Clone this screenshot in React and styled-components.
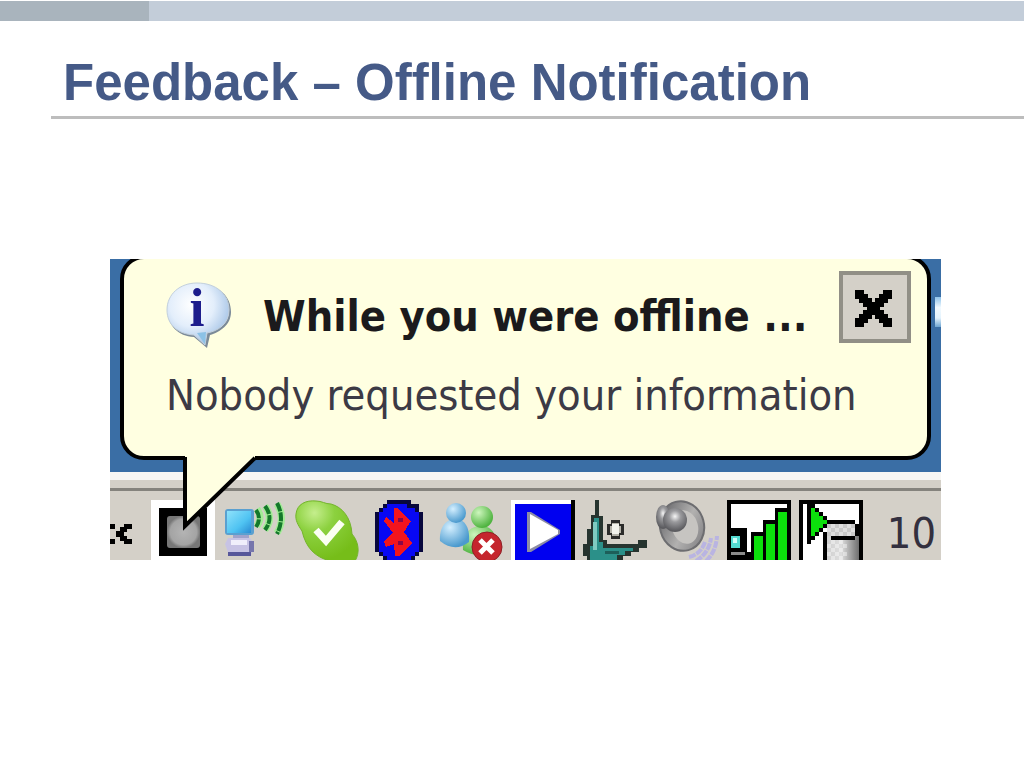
import React from 'react';
import styled, { createGlobalStyle } from 'styled-components'

const GlobalStyle = createGlobalStyle`
    * {
        box-sizing: border-box;
    }
    body {
        margin: 0;
        background-color: #fff;
        font-family: "Liberation Sans", Arial, sans-serif;
    }
`

const Slide = styled.div`
    padding-top: 1px;
`

const TopBar = styled.div`
    display: flex;
    height: 20px;
    background-color: #c3cdd9;
`

const TopBarAccent = styled.div`
    width: 149px;
    background-color: #a9b4bd;
`

const TitleBlock = styled.header`
    margin-left: 51px;
    padding: 32px 12px 4px;
    border-bottom: 3px solid #bdbdbd;
`

const Title = styled.h1`
    margin: 0;
    color: #455a87;
    font-size: 51px;
    line-height: 59px;
    font-weight: bold;
`

const Content = styled.main`
    padding: 140px 83px 40px 110px;
`

const Screen = styled.section`
    overflow: hidden;
    background-color: #3a6ea5;
`

const Desktop = styled.div`
    position: relative;
    padding: 0 10px 12px;
`

const DesktopIcon = styled.div`
    position: absolute;
    top: 42px;
    right: 0;
    width: 6px;
    height: 30px;
    background: linear-gradient(#8fc3ea, #f2faff 35%, #e4f3fd 70%, #6fa6d2);
`

const Balloon = styled.div`
    position: relative;
    margin-top: -4px;
    padding: 12px 16px 35px 42px;
    border: 4px solid #000;
    border-radius: 24px;
    background-color: #ffffe1;
    font-family: "DejaVu Sans Condensed", "DejaVu Sans", Tahoma, sans-serif;
`

const BalloonHeader = styled.div`
    display: flex;
    gap: 33px;
    height: 72px;
`

const BalloonIcon = styled.svg`
    flex: none;
    margin-top: 11px;
    overflow: visible;
`

const BalloonTitle = styled.h2`
    flex: 1;
    min-width: 0;
    margin: 0;
    padding-top: 19px;
    color: #1b1a1c;
    font-size: 43px;
    line-height: 52px;
    font-weight: bold;
    white-space: nowrap;
`

const BalloonText = styled.p`
    margin: 26px 0 0;
    color: #3c3a45;
    font-size: 43px;
    line-height: 52px;
    white-space: nowrap;
`

const BalloonTail = styled.svg`
    position: absolute;
    top: 194px;
    left: 56px;
    z-index: 1;
`

const CloseButton = styled.button`
    display: flex;
    flex: none;
    align-items: center;
    justify-content: center;
    width: 72px;
    height: 72px;
    margin-left: -33px;
    padding: 0;
    border: 4px solid #918f86;
    background-color: #d4d0c8;
`

const Taskbar = styled.footer`
    border-top: 8px solid #f8f7f4;
    padding-top: 8px;
    background-color: #d4d0c8;
`

const Tray = styled.div`
    display: flex;
    gap: 8px;
    height: 72px;
    padding: 9px 5px 0 0;
    border-top: 3px solid #85837d;
`

const TrayButton = styled.button`
    flex: none;
    width: ${(props) => props.$width || '64px'};
    height: 61px;
    padding: 0;
    border: 0;
    background: none;
    > svg {
        display: block;
    }
`

const Clock = styled.time`
    margin-left: auto;
    color: #33303f;
    font-family: "DejaVu Sans Condensed", "DejaVu Sans", Tahoma, sans-serif;
    font-size: 43px;
    line-height: 66px;
`

function InfoIcon() {
    return (
        <BalloonIcon width="64" height="68" viewBox="0 0 64 68" aria-hidden="true">
            <defs>
                <radialGradient id="bubble" cx="0.4" cy="0.35" r="0.65">
                    <stop offset="0" stopColor="#ffffff" />
                    <stop offset="0.55" stopColor="#e3eefb" />
                    <stop offset="1" stopColor="#a6c4e6" />
                </radialGradient>
            </defs>
            <path d="M34 3C53 3 65 14 65 30C65 43 54 50 44 53L41 66L28 55C12 54 2 44 2 29C2 14 14 3 34 3Z" fill="#7b8a98" />
            <path d="M31 1C50 1 63 12 63 28C63 42 52 49 41 51L39 63L28 53C12 52 1 43 1 28C1 12 14 1 31 1Z" fill="url(#bubble)" stroke="#c3d0dc" strokeWidth="1" />
            <path d="M31 51L39 62L40 50Z" fill="#8cc2e6" />
            <text x="31" y="44" textAnchor="middle" fontFamily="Liberation Serif, serif" fontWeight="bold" fontSize="54" fill="#1d1d8c">i</text>
        </BalloonIcon>
    )
}

function CloseIcon() {
    return (
        <svg width="40" height="40" viewBox="0 0 40 40" shapeRendering="crispEdges" aria-hidden="true">
            <path d="M0 3H9V7H13V11H17V15H20V11H24V7H28V3H37V12H33V16H29V20H25V23H29V27H33V31H37V40H28V36H24V32H20V28H17V32H13V36H9V40H0V31H4V27H8V23H12V20H8V16H4V12H0Z" />
        </svg>
    )
}

function MoreIcon() {
    return (
        <svg width="33" height="61" viewBox="0 0 33 61" shapeRendering="crispEdges">
            <path d="M14 24H22V29H17V32H14V36H17V39H22V44H14V41H10V37H6V31H10V27H14ZM0 24H5V29H0ZM0 39H5V44H0Z" />
        </svg>
    )
}

function ScreenIcon() {
    return (
        <svg width="64" height="61" viewBox="0 0 64 61">
            <defs>
                <radialGradient id="panel">
                    <stop offset="0" stopColor="#b4b4b4" />
                    <stop offset="0.8" stopColor="#a4a4a4" />
                    <stop offset="1" stopColor="#777" />
                </radialGradient>
            </defs>
            <path d="M0 0H65V61H0Z" fill="#fff" />
            <path d="M8 8H56V56H8Z" />
            <rect x="16" y="16" width="33" height="32" rx="3" fill="url(#panel)" />
        </svg>
    )
}

function WirelessIcon() {
    return (
        <svg width="64" height="61" viewBox="0 0 64 61">
            <defs>
                <linearGradient id="monitor" x1="0" y1="0" x2="1" y2="1">
                    <stop offset="0" stopColor="#8fe2fb" />
                    <stop offset="0.6" stopColor="#4fc3f2" />
                    <stop offset="1" stopColor="#2a8bd2" />
                </linearGradient>
            </defs>
            <rect x="2" y="9" width="29" height="26" rx="3" fill="#5aa0d0" />
            <rect x="4" y="11" width="24" height="22" fill="url(#monitor)" />
            <path d="M10 35H26V39H10Z" fill="#9fa3cc" />
            <path d="M5 38H27L31 44L28 55H6L2 44Z" fill="#c7c3e4" />
            <path d="M8 40H24V45H8Z" fill="#f0effb" />
            <path d="M5 52H28V56H5Z" fill="#57579a" />
            <path d="M26 41H31V52H26Z" fill="#7676ac" />
            <g fill="none" stroke="#a2ec96" strokeWidth="7">
                <path d="M34 9Q40 17 34 26" />
                <path d="M42 6Q51 18 42 30" />
                <path d="M54 4Q63 18 54 33" />
            </g>
            <g fill="none" stroke="#14782a" strokeWidth="4" strokeDasharray="9 1">
                <path d="M33 10Q39 18 33 27" />
                <path d="M42 6Q51 18 42 30" />
                <path d="M54 3Q62 18 54 34" />
            </g>
        </svg>
    )
}

function OnlineIcon() {
    return (
        <svg width="64" height="61" viewBox="0 0 64 61">
            <defs>
                <radialGradient id="cloud" cx="0.3" cy="0.2" r="0.8">
                    <stop offset="0" stopColor="#c5ee8d" />
                    <stop offset="0.4" stopColor="#8cd13f" />
                    <stop offset="1" stopColor="#76bd19" />
                </radialGradient>
            </defs>
            <path d="M1 14C2 4 11 0 21 1C27 1 30 4 36 4C47 7 56 17 57 34C64 42 65 53 60 61H35C20 57 11 48 7 31C3 25 0 20 1 14Z" fill="url(#cloud)" stroke="#74b42c" strokeWidth="1" />
            <path d="M21 30L31 41L47 22" fill="none" stroke="#fbfff2" strokeWidth="7" />
        </svg>
    )
}

function BluetoothIcon() {
    return (
        <svg width="64" height="61" viewBox="0 0 64 61" shapeRendering="crispEdges">
            <path d="M20 0H44V4H52V12H56V52H52V56H48V61H16V56H12V52H8V12H12V8H16V4H20Z" fill="#07073c" />
            <path d="M20 4H40V8H48V12H52V52H48V56H44V61H20V56H16V52H12V12H16V8H20Z" fill="#0808f4" />
            <path d="M27 8H30L44 21L37 32L45 43L32 56H28L27 44L19 47L17 41L26 33L17 21L19 17L27 23Z" fill="#f3141e" />
            <path d="M31 18H36V22H31ZM31 41H36V45H31Z" fill="#8a0848" />
        </svg>
    )
}

function ContactsIcon() {
    return (
        <svg width="64" height="61" viewBox="0 0 64 61">
            <defs>
                <radialGradient id="blueGuy" cx="0.35" cy="0.3" r="0.7">
                    <stop offset="0" stopColor="#d4efff" />
                    <stop offset="1" stopColor="#4b9ace" />
                </radialGradient>
                <radialGradient id="greenGuy" cx="0.35" cy="0.3" r="0.7">
                    <stop offset="0" stopColor="#cdf6bd" />
                    <stop offset="1" stopColor="#4eb33f" />
                </radialGradient>
            </defs>
            <path d="M24 50C23 35 30 26 42 26C54 26 59 36 56 50Q40 60 24 50Z" fill="url(#greenGuy)" />
            <circle cx="43" cy="17" r="11" fill="url(#greenGuy)" />
            <path d="M1 41C0 29 6 19 16 19C27 19 31 29 30 42Q16 53 1 41Z" fill="url(#blueGuy)" />
            <circle cx="17" cy="13" r="10" fill="url(#blueGuy)" />
            <circle cx="48" cy="47" r="15" fill="#c5252d" stroke="#8d2026" strokeWidth="1" />
            <path d="M41 40L54 53M54 40L41 53" stroke="#fff" strokeWidth="5" />
        </svg>
    )
}

function PlayIcon() {
    return (
        <svg width="64" height="61" viewBox="0 0 64 61">
            <path d="M0 0H60V4H4V61H0Z" fill="#fff" />
            <path d="M4 4H60V61H4Z" fill="#0000f0" />
            <path d="M60 0H64V61H60Z" />
            <path d="M16 12H20L49 30V34L20 52H16Z" fill="#8c8ca4" />
            <path d="M19 14L47 30V34L19 49Z" fill="#fff" />
        </svg>
    )
}

function AgentIcon() {
    return (
        <svg width="64" height="61" viewBox="0 0 64 61" shapeRendering="crispEdges">
            <path d="M12 0H16V16H20V40H24V44H55V40H64V48H56V52H48V56H40V61H4V56H0V44H4V29H8V15H12Z" fill="#26342f" />
            <path d="M11 18H16V42H20V48H50V51H42V55H34V61H7V46H10Z" fill="#2b9089" />
            <path d="M10 22H14V50H10Z" fill="#7fcac0" />
            <path d="M22 51H36V54H22Z" fill="#1d5f5a" />
            <path d="M28 20H37V24H41V35H37V39H28V35H24V24H28Z" fill="#2b2b2a" />
            <path d="M29 23H36V26H38V33H36V36H29V33H27V26H29Z" fill="#b5b3aa" />
            <path d="M29 24H36V34H29Z" fill="#f2f2ec" />
        </svg>
    )
}

function SpeakerIcon() {
    return (
        <svg width="64" height="61" viewBox="0 0 64 61">
            <defs>
                <linearGradient id="ring" x1="0" y1="0" x2="1" y2="1">
                    <stop offset="0" stopColor="#58585c" />
                    <stop offset="0.55" stopColor="#b2b1b0" />
                    <stop offset="1" stopColor="#77767a" />
                </linearGradient>
                <radialGradient id="cone" cx="0.5" cy="0.35" r="0.6">
                    <stop offset="0" stopColor="#f6f6f6" />
                    <stop offset="0.4" stopColor="#9a9a9d" />
                    <stop offset="1" stopColor="#5c5c60" />
                </radialGradient>
            </defs>
            <g fill="none" stroke="#b9b4e2" strokeWidth="4" strokeDasharray="7 1">
                <path d="M34 57Q46 54 50 42" />
                <path d="M41 61Q54 53 56 38" />
                <path d="M51 61Q61 52 62 36" />
            </g>
            <ellipse cx="27" cy="26" rx="22" ry="25" fill="url(#ring)" stroke="#6d6d70" strokeWidth="2" transform="rotate(-15 27 26)" />
            <ellipse cx="30" cy="27" rx="13" ry="17" fill="#c6c4c1" transform="rotate(-15 30 27)" />
            <ellipse cx="8" cy="17" rx="7" ry="12" fill="url(#cone)" />
            <circle cx="20" cy="20" r="12" fill="url(#cone)" />
        </svg>
    )
}

function SignalIcon() {
    return (
        <svg width="64" height="61" viewBox="0 0 64 61" shapeRendering="crispEdges">
            <path d="M0 0H64V61H0Z" />
            <path d="M4 4H60V8H48V20H36V32H24V52H20V28H4Z" fill="#fff" />
            <path d="M4 36H13V48H4Z" fill="#54dcd2" />
            <path d="M6 38H10V43H6Z" fill="#d2fffa" />
            <path d="M4 52H18V55H4Z" fill="#8c8c8c" />
            <path d="M27 36H36V61H27ZM39 24H48V61H39ZM51 12H60V61H51Z" fill="#0ce00c" />
        </svg>
    )
}

function DatabaseIcon() {
    return (
        <svg width="64" height="61" viewBox="0 0 64 61" shapeRendering="crispEdges">
            <defs>
                <linearGradient id="drum">
                    <stop offset="0" stopColor="#d0d0d0" />
                    <stop offset="0.45" stopColor="#dedede" />
                    <stop offset="1" stopColor="#6e6e6e" />
                </linearGradient>
                <pattern id="dots" width="8" height="8" patternUnits="userSpaceOnUse">
                    <path d="M0 0H4V4H0ZM4 4H8V8H4Z" fill="#fff" opacity="0.4" />
                </pattern>
            </defs>
            <path d="M0 0H64V61H0Z" />
            <path d="M4 4H60V61H4Z" fill="#fff" />
            <path d="M28 20H56V24H60V61H24V32H28Z" />
            <path d="M28 24H56V36H32V61H28Z" fill="#c9c9c9" />
            <path d="M28 36H32V40H56V36H60V61H28Z" fill="url(#drum)" />
            <path d="M28 24H56V36H28ZM28 40H48V61H28Z" fill="url(#dots)" />
            <path d="M8 4H16V8H20V12H24V16H28V20H32V24H28V28H24V32H20V36H16V40H12V44H8Z" />
            <path d="M12 8H16V12H20V16H24V20H28V24H24V28H20V32H16V36H12Z" fill="#0ce00c" />
        </svg>
    )
}

const trayItems = [
    { label: 'Display', icon: <ScreenIcon /> },
    { label: 'Wireless network', icon: <WirelessIcon /> },
    { label: 'Online status', icon: <OnlineIcon /> },
    { label: 'Bluetooth', icon: <BluetoothIcon /> },
    { label: 'Contacts', icon: <ContactsIcon /> },
    { label: 'Player', icon: <PlayIcon /> },
    { label: 'Agent', icon: <AgentIcon /> },
    { label: 'Volume', icon: <SpeakerIcon /> },
    { label: 'Signal strength', icon: <SignalIcon /> },
    { label: 'Database', icon: <DatabaseIcon /> },
]

function Notification() {
    return (
        <Balloon role="status">
            <BalloonHeader>
                <InfoIcon />
                <BalloonTitle>While you were offline ...</BalloonTitle>
                <CloseButton aria-label="Close">
                    <CloseIcon />
                </CloseButton>
            </BalloonHeader>
            <BalloonText>Nobody requested your information</BalloonText>
            {/* covers the bottom border and points down at the tray */}
            <BalloonTail width="84" height="84" viewBox="0 0 84 84" aria-hidden="true">
                <path d="M5 0V73L75 5V0Z" fill="#ffffe1" />
                <path d="M5 4V73L75 5" fill="none" stroke="#000" strokeWidth="4" />
            </BalloonTail>
        </Balloon>
    )
}

function App() {
    return (
        <Slide>
            <GlobalStyle />
            <TopBar>
                <TopBarAccent />
            </TopBar>
            <TitleBlock>
                <Title>Feedback – Offline Notification</Title>
            </TitleBlock>
            <Content>
                <Screen>
                    <Desktop>
                        <DesktopIcon />
                        <Notification />
                    </Desktop>
                    <Taskbar>
                        <Tray>
                            <TrayButton $width="33px" aria-label="Show hidden icons">
                                <MoreIcon />
                            </TrayButton>
                            {trayItems.map(({ label, icon }) => (
                                <TrayButton key={label} aria-label={label}>{icon}</TrayButton>
                            ))}
                            <Clock>10</Clock>
                        </Tray>
                    </Taskbar>
                </Screen>
            </Content>
        </Slide>
    );
}

export default App;
